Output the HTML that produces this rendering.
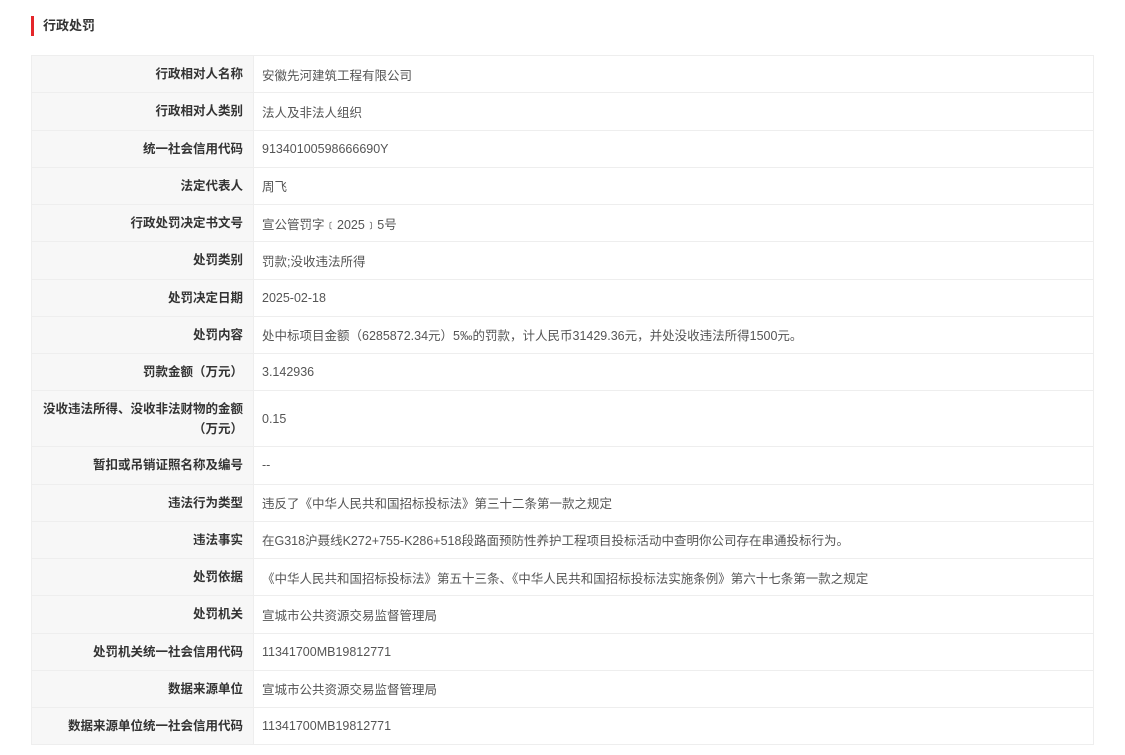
<!DOCTYPE html>
<html><head><meta charset="utf-8"><style>
body{margin:0;background:#fff;font-family:"Liberation Sans","Noto Sans CJK SC",sans-serif;}
.t{position:absolute;left:31px;top:16px;height:20px;border-left:3px solid #e4262a;padding-left:9px;font-size:13px;font-weight:bold;color:#333;line-height:20px}
table{position:absolute;left:31px;top:55px;width:1063px;border-collapse:collapse;font-size:12.5px}
td{border:1px solid #eee;height:36.25px;padding:0;}
td.l{width:211px;background:#f7f7f7;text-align:right;padding-right:10px;font-weight:bold;color:#333;line-height:20px}
td.v{padding-left:8px;color:#555}
</style></head><body>
<div class="t">行政处罚</div>
<table>
<tr><td class="l">行政相对人名称</td><td class="v">安徽先河建筑工程有限公司</td></tr>
<tr><td class="l">行政相对人类别</td><td class="v">法人及非法人组织</td></tr>
<tr><td class="l">统一社会信用代码</td><td class="v">91340100598666690Y</td></tr>
<tr><td class="l">法定代表人</td><td class="v">周飞</td></tr>
<tr><td class="l">行政处罚决定书文号</td><td class="v">宣公管罚字﹝2025﹞5号</td></tr>
<tr><td class="l">处罚类别</td><td class="v">罚款;没收违法所得</td></tr>
<tr><td class="l">处罚决定日期</td><td class="v">2025-02-18</td></tr>
<tr><td class="l">处罚内容</td><td class="v">处中标项目金额（6285872.34元）5‰的罚款，计人民币31429.36元，并处没收违法所得1500元。</td></tr>
<tr><td class="l">罚款金额（万元）</td><td class="v">3.142936</td></tr>
<tr><td class="l" style="height:55px">没收违法所得、没收非法财物的金额（万元）</td><td class="v">0.15</td></tr>
<tr><td class="l">暂扣或吊销证照名称及编号</td><td class="v">--</td></tr>
<tr><td class="l">违法行为类型</td><td class="v">违反了《中华人民共和国招标投标法》第三十二条第一款之规定</td></tr>
<tr><td class="l">违法事实</td><td class="v">在G318沪聂线K272+755-K286+518段路面预防性养护工程项目投标活动中查明你公司存在串通投标行为。</td></tr>
<tr><td class="l">处罚依据</td><td class="v">《中华人民共和国招标投标法》第五十三条、《中华人民共和国招标投标法实施条例》第六十七条第一款之规定</td></tr>
<tr><td class="l">处罚机关</td><td class="v">宣城市公共资源交易监督管理局</td></tr>
<tr><td class="l">处罚机关统一社会信用代码</td><td class="v">11341700MB19812771</td></tr>
<tr><td class="l">数据来源单位</td><td class="v">宣城市公共资源交易监督管理局</td></tr>
<tr><td class="l">数据来源单位统一社会信用代码</td><td class="v">11341700MB19812771</td></tr>
</table>
</body></html>
